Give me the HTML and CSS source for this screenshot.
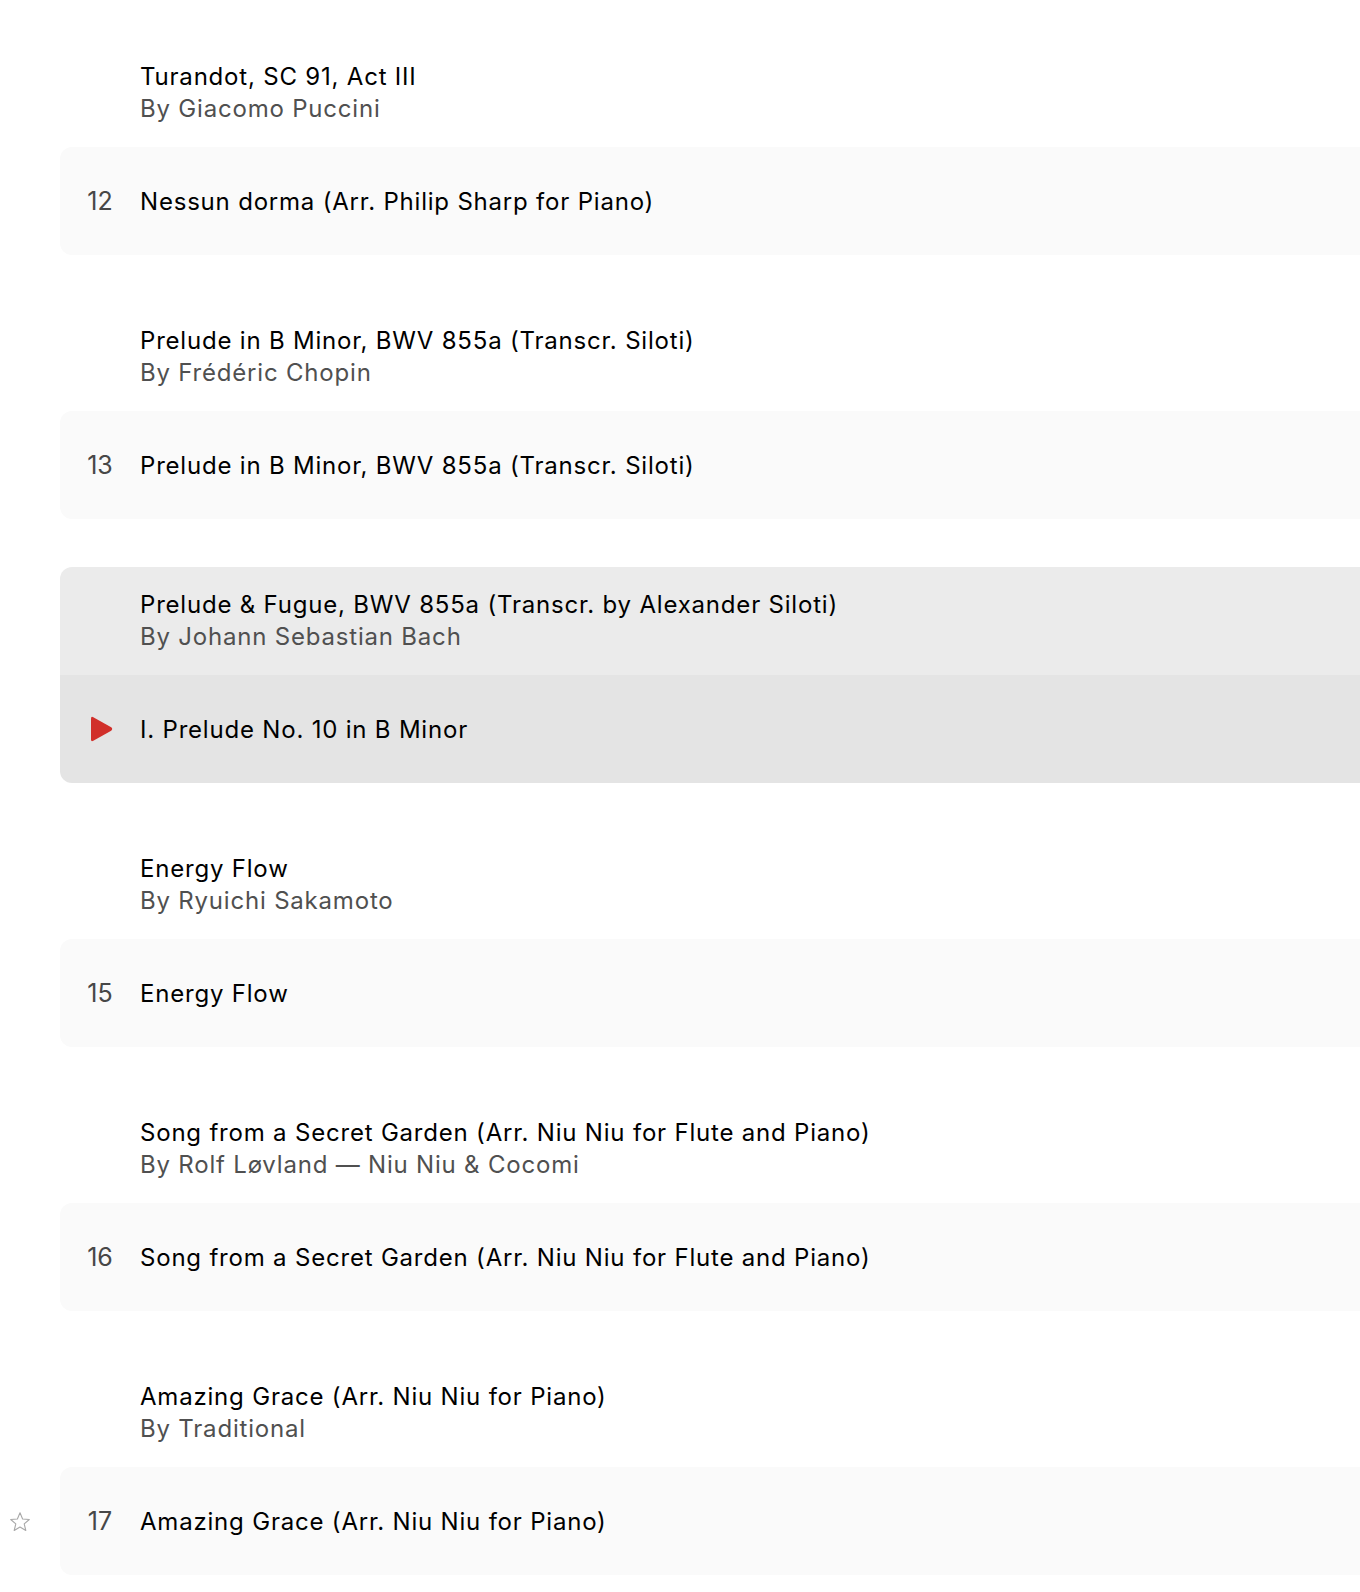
FILE: index.html
```html
<!DOCTYPE html>
<html lang="en">
<head>
<meta charset="UTF-8" />
<meta name="viewport" content="width=device-width, initial-scale=1.0"/>
<title>Queue</title>
<link rel="stylesheet" href="styles.css">
</head>
<body>

<div class="queue">
  <!-- Puccini -->
  <div class="group">
    <div class="work">
      <div class="work-title">Turandot, SC 91, Act III</div>
      <div class="work-by">By Giacomo Puccini</div>
    </div>
    <div class="track">
      <span class="num">12</span>
      <span class="name">Nessun dorma (Arr. Philip Sharp for Piano)</span>
    </div>
  </div>

  <!-- Chopin -->
  <div class="group">
    <div class="work">
      <div class="work-title">Prelude in B Minor, BWV 855a (Transcr. Siloti)</div>
      <div class="work-by">By Frédéric Chopin</div>
    </div>
    <div class="track">
      <span class="num">13</span>
      <span class="name">Prelude in B Minor, BWV 855a (Transcr. Siloti)</span>
    </div>
  </div>

  <!-- Bach (now playing) -->
  <div class="group playing">
    <div class="work">
      <div class="work-title">Prelude &amp; Fugue, BWV 855a (Transcr. by Alexander Siloti)</div>
      <div class="work-by">By Johann Sebastian Bach</div>
    </div>
    <div class="track">
      <span class="num">
        <svg class="play" width="26" height="28" viewBox="0 0 26 28">
          <path d="M3 3.5 Q3 1 5.3 2.2 L23.2 12.3 Q25.2 14 23.2 15.7 L5.3 25.8 Q3 27 3 24.5 Z" fill="#d12f2a"/>
        </svg>
      </span>
      <span class="name">I. Prelude No. 10 in B Minor</span>
    </div>
  </div>

  <!-- Sakamoto -->
  <div class="group">
    <div class="work">
      <div class="work-title">Energy Flow</div>
      <div class="work-by">By Ryuichi Sakamoto</div>
    </div>
    <div class="track">
      <span class="num">15</span>
      <span class="name">Energy Flow</span>
    </div>
  </div>

  <!-- Løvland -->
  <div class="group">
    <div class="work">
      <div class="work-title">Song from a Secret Garden (Arr. Niu Niu for Flute and Piano)</div>
      <div class="work-by">By Rolf Løvland — Niu Niu &amp; Cocomi</div>
    </div>
    <div class="track">
      <span class="num">16</span>
      <span class="name">Song from a Secret Garden (Arr. Niu Niu for Flute and Piano)</span>
    </div>
  </div>

  <!-- Traditional -->
  <div class="group">
    <div class="work">
      <div class="work-title">Amazing Grace (Arr. Niu Niu for Piano)</div>
      <div class="work-by">By Traditional</div>
    </div>
    <div class="track">
      <span class="fav">
        <svg width="22" height="22" viewBox="0 0 22 22">
          <path d="M11 1.8 L13.6 8 L20.3 8.5 L15.2 12.9 L16.8 19.5 L11 16 L5.2 19.5 L6.8 12.9 L1.7 8.5 L8.4 8 Z" fill="none" stroke="#a8a8a8" stroke-width="1.1" stroke-linejoin="round"/>
        </svg>
      </span>
      <span class="num">17</span>
      <span class="name">Amazing Grace (Arr. Niu Niu for Piano)</span>
    </div>
  </div>
</div>

</body>
</html>
```

FILE: styles.css
```css
:root {
  --card: #fafafa;
  --active-head: #ebebeb;
  --active-row: #e4e4e4;
}
body {
  margin: 0;
  background: white;
  font-family: Inter, "Noto Sans", sans-serif;
  color: #000;
  overflow: hidden;
}
.queue {
  padding-top: 39px;
  padding-left: 60px;
}
.group {
  margin-bottom: 48px;
}
.work {
  height: 108px;
  box-sizing: border-box;
  padding: 22px 0 0 80px;
  font-size: 24px;
  line-height: 32px;
  letter-spacing: 0.8px;
  border-radius: 12px 0 0 0;
}
.work-by {
  color: #505050;
}
.track {
  position: relative;
  display: flex;
  align-items: center;
  height: 108px;
  background: var(--card);
  border-radius: 12px 0 0 12px;
  font-size: 24px;
  letter-spacing: 0.8px;
}
.num {
  width: 80px;
  flex-shrink: 0;
  color: #474747;
  font-size: 25px;
  letter-spacing: 0;
  display: flex;
  justify-content: center;
  align-items: center;
}
.playing .work {
  background: var(--active-head);
}
.playing .track {
  background: var(--active-row);
  border-radius: 0 0 0 12px;
}
.play {
  display: block;
  margin-left: 2px;
}
.fav {
  position: absolute;
  left: -51px;
  top: 44px;
  line-height: 0;
}
```
